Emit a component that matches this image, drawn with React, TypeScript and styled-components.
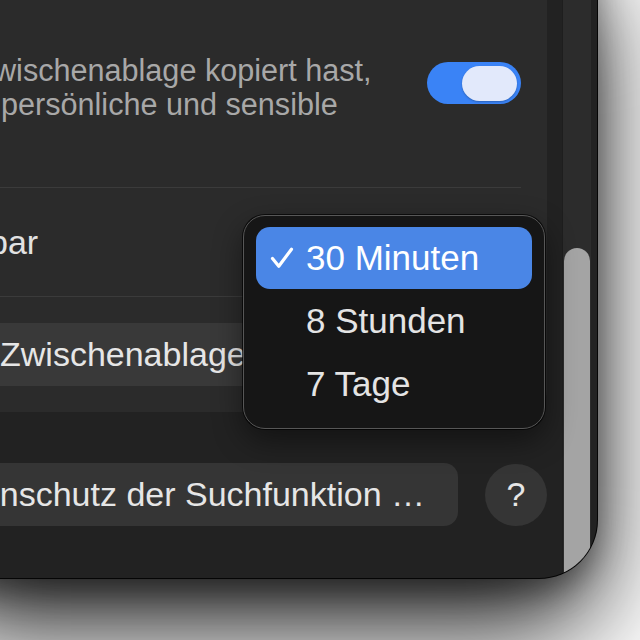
import React from "react";
import styled, { createGlobalStyle } from "styled-components";

const GlobalStyle = createGlobalStyle`
  html, body { margin: 0; padding: 0; background: #ffffff; }
  body { font-family: "Liberation Sans", Arial, sans-serif; }
  #root { width: 640px; height: 640px; }
  * { box-sizing: border-box; }
`;

const Stage = styled.div`
  width: 640px;
  height: 640px;
  overflow: hidden;
  background: #ffffff;
`;

const Window = styled.div`
  display: flex;
  width: 657px;
  height: 638px;
  margin: -60px 0 0 -60px;
  padding-right: 6px;
  background: #222222;
  border-radius: 0 0 58px 0;
  box-shadow: 0 0 0 1px #050505, 0 14px 30px rgba(0, 0, 0, 0.35),
    0 50px 110px rgba(0, 0, 0, 0.9);
  overflow: hidden;
`;

const Content = styled.div`
  flex: 1;
  min-width: 0;
  display: flex;
  flex-direction: column;
  padding: 20px 15px 0 20px;
`;

const Group = styled.div`
  background: #2b2b2b;
  border-radius: 22px;
`;

const ToggleRow = styled.div`
  display: flex;
  align-items: flex-start;
  gap: 20px;
  padding: 93px 26px 66px 36px;
`;

const Description = styled.div`
  flex: 1;
  min-width: 0;
  font-size: 30.6px;
  line-height: 34px;
  color: #a8a8a8;
  white-space: nowrap;
`;

const DescLine = styled.span<{ $shift: number }>`
  display: block;
  margin-left: ${(p) => p.$shift}px;
`;

const Toggle = styled.div`
  flex-shrink: 0;
  width: 94px;
  height: 42px;
  margin-top: 9px;
  padding: 0 4px;
  border-radius: 21px;
  background: #3a83f6;
  display: flex;
  align-items: center;
  justify-content: flex-end;
`;

const Knob = styled.div`
  width: 55px;
  height: 35px;
  border-radius: 18px;
  background: #e2e9fb;
  box-shadow: 0 1px 2px rgba(0, 0, 0, 0.25);
`;

const Separator = styled.div`
  height: 1px;
  margin: 0 26px 0 36px;
  background: #3b3b3b;
`;

const PopupRow = styled.div`
  position: relative;
  height: 108px;
  display: flex;
  align-items: center;
  padding: 0 26px 0 36px;
`;

const Label = styled.span<{ $shift: number }>`
  margin-left: ${(p) => p.$shift}px;
  font-size: 34px;
  color: #e2e2e2;
  white-space: nowrap;
`;

const Menu = styled.div`
  position: absolute;
  top: 27px;
  right: 2px;
  z-index: 2;
  width: 302px;
  padding: 11px 12px 13px;
  display: flex;
  flex-direction: column;
  gap: 1px;
  background: #161616;
  border: 1px solid #575757;
  border-radius: 22px;
  box-shadow: 0 0 0 1px rgba(0, 0, 0, 0.7), 0 12px 30px rgba(0, 0, 0, 0.45);
`;

const MenuItem = styled.div<{ $selected?: boolean }>`
  height: 62px;
  display: flex;
  align-items: center;
  padding-left: 14px;
  border-radius: 14px;
  background: ${(p) => (p.$selected ? "#4a86e6" : "transparent")};
  color: ${(p) => (p.$selected ? "#ffffff" : "#e4e4e4")};
  font-size: 35px;
  white-space: nowrap;
`;

const CheckSlot = styled.span`
  width: 36px;
  flex-shrink: 0;
  display: flex;
  align-items: center;
`;

const ButtonRow = styled.div`
  padding: 26px 0 26px 16px;
`;

const ActionButton = styled.button`
  height: 63px;
  width: 300px;
  padding: 0 24px;
  border: none;
  border-radius: 14px;
  background: #393939;
  color: #e6e6e6;
  font-family: inherit;
  font-size: 34px;
  white-space: nowrap;
  display: inline-flex;
  align-items: center;
`;

const BottomRow = styled.div`
  display: flex;
  justify-content: flex-end;
  align-items: center;
  gap: 27px;
  margin-top: 51px;
`;

const WideButton = styled.button`
  flex-shrink: 0;
  height: 63px;
  padding: 0 33px;
  border: none;
  border-radius: 14px;
  background: #353535;
  color: #e6e6e6;
  font-family: inherit;
  font-size: 34px;
  white-space: nowrap;
  display: flex;
  align-items: center;
`;

const HelpButton = styled.button`
  flex-shrink: 0;
  width: 62px;
  height: 62px;
  padding: 0;
  border: none;
  border-radius: 50%;
  background: #353535;
  color: #e6e6e6;
  font-family: inherit;
  font-size: 34px;
  display: flex;
  align-items: center;
  justify-content: center;
`;

const ScrollTrack = styled.div`
  width: 29px;
  flex-shrink: 0;
  display: flex;
  flex-direction: column;
  padding-top: 308px;
  background: #2c2c2c;
  border-left: 1px solid #1e1e1e;
`;

const Thumb = styled.div`
  flex: 1;
  margin: 0 1px 0 1px;
  border-radius: 14px 14px 0 0;
  background: #a4a4a4;
`;

const CheckIcon = () => (
  <svg width="24" height="22" viewBox="0 0 24 22" aria-hidden="true">
    <path
      d="M2.5 11.5 L8.8 19.2 L21.5 2.2"
      fill="none"
      stroke="#ffffff"
      strokeWidth="3.2"
      strokeLinecap="round"
      strokeLinejoin="round"
    />
  </svg>
);

const options = [
  { label: "30 Minuten", selected: true },
  { label: "8 Stunden", selected: false },
  { label: "7 Tage", selected: false },
];

export default function App() {
  return (
    <>
      <GlobalStyle />
      <Stage>
        <Window>
          <Content>
            <Group>
              <ToggleRow>
                <Description>
                  <DescLine $shift={-2}>wischenablage kopiert hast,</DescLine>
                  <DescLine $shift={5}>persönliche und sensible</DescLine>
                </Description>
                <Toggle>
                  <Knob />
                </Toggle>
              </ToggleRow>
              <Separator />
              <PopupRow>
                <Label $shift={-7}>bar</Label>
                <Menu>
                  {options.map((o) => (
                    <MenuItem key={o.label} $selected={o.selected}>
                      <CheckSlot>{o.selected && <CheckIcon />}</CheckSlot>
                      {o.label}
                    </MenuItem>
                  ))}
                </Menu>
              </PopupRow>
              <Separator />
              <ButtonRow>
                <ActionButton>Zwischenablage</ActionButton>
              </ButtonRow>
            </Group>
            <BottomRow>
              <WideButton>Über Datenschutz der Suchfunktion …</WideButton>
              <HelpButton>?</HelpButton>
            </BottomRow>
          </Content>
          <ScrollTrack>
            <Thumb />
          </ScrollTrack>
        </Window>
      </Stage>
    </>
  );
}
